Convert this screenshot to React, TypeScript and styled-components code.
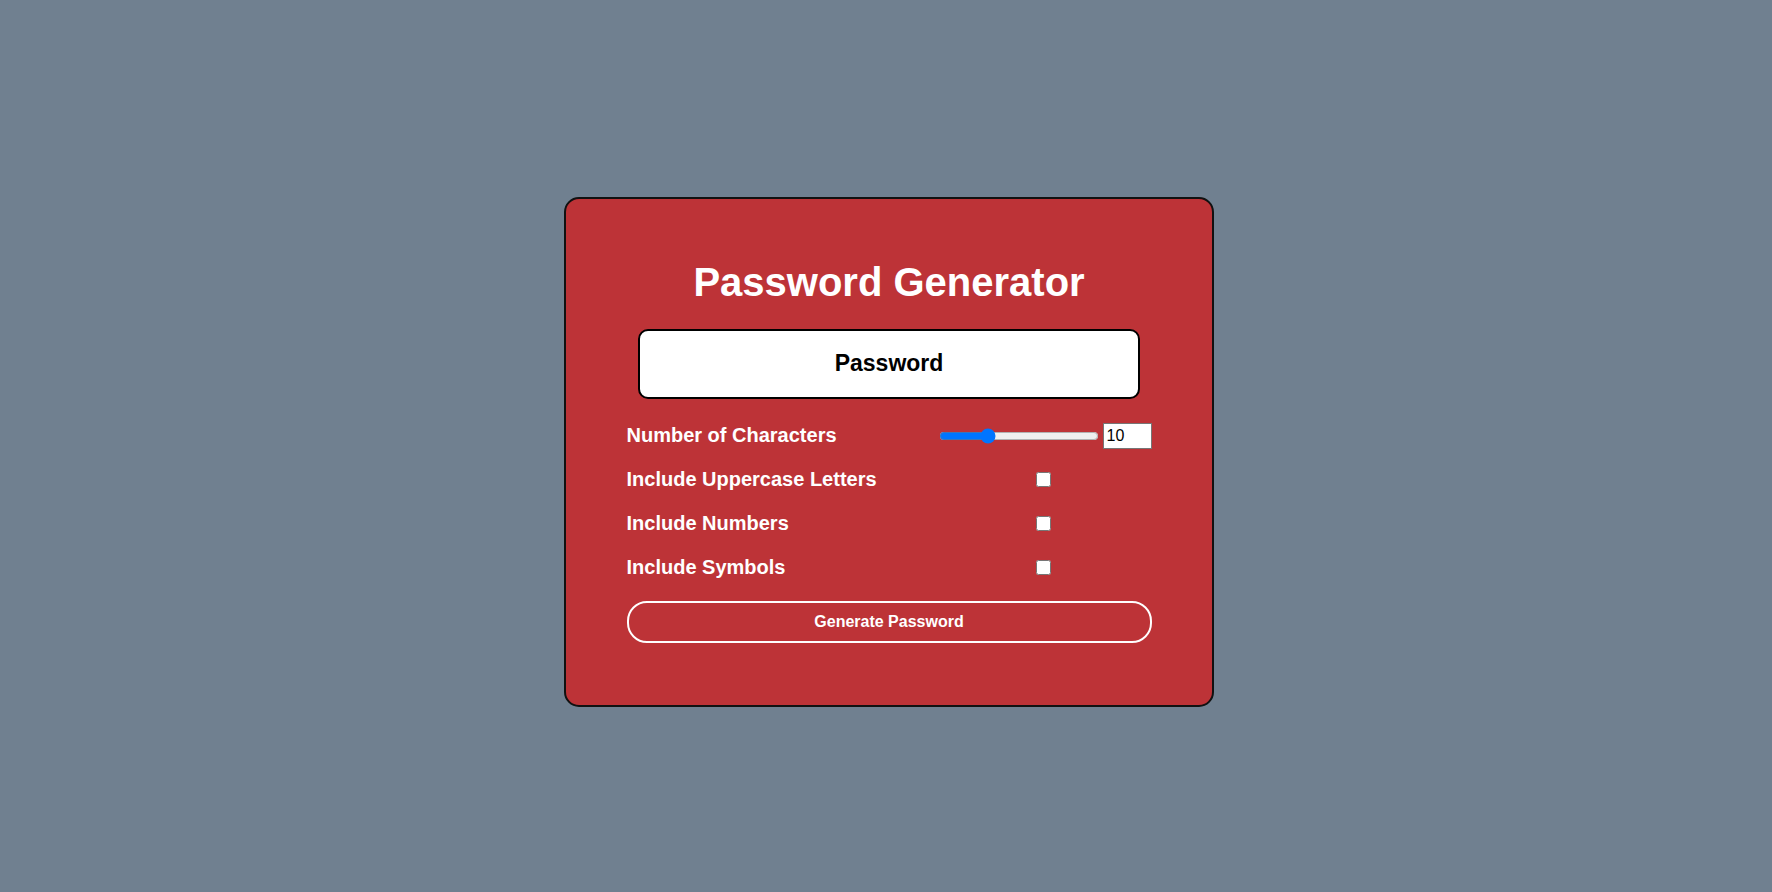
import React, { useState } from "react";
import styled, { createGlobalStyle } from "styled-components";

const GlobalStyle = createGlobalStyle`
  html, body {
    margin: 0;
    padding: 0;
    background: #708090;
    font-family: "Liberation Sans", Arial, sans-serif;
  }
  * { box-sizing: border-box; }
`;

const Page = styled.div`
  min-height: 100vh;
  display: flex;
  justify-content: center;
  align-items: center;
  padding: 11px 0 0 5px;
`;

const Card = styled.div`
  width: 650px;
  background: #bd3337;
  border: 2px solid #111;
  border-radius: 15px;
  padding: 60px 60px 62px 61px;
  display: flex;
  flex-direction: column;
`;

const Title = styled.h1`
  margin: 0;
  color: #fff;
  font-size: 40px;
  font-weight: 700;
  line-height: 46px;
  text-align: center;
`;

const Display = styled.div`
  width: 502px;
  height: 70px;
  margin: 24px auto 0;
  background: #fff;
  border: 2px solid #000;
  border-radius: 10px;
  display: flex;
  align-items: center;
  justify-content: center;
  font-size: 23px;
  font-weight: 700;
  color: #000;
`;

const Options = styled.div`
  margin-top: 24px;
  display: flex;
  flex-direction: column;
  gap: 18px;
`;

const Row = styled.div`
  height: 26px;
  display: grid;
  grid-template-columns: 1fr 213px;
  align-items: center;
`;

const Label = styled.label`
  color: #fff;
  font-size: 20px;
  font-weight: 700;
  line-height: 23px;
`;

const Control = styled.div`
  display: flex;
  align-items: center;
  justify-content: center;
`;

const Slider = styled.input`
  width: 160px;
  margin: 0;
  accent-color: #0075ff;
`;

const NumberBox = styled.input`
  width: 49px;
  height: 26px;
  margin-left: 4px;
  padding: 1px 3px;
  border: 1px solid #767676;
  background: #fff;
  font-family: "Liberation Sans", Arial, sans-serif;
  font-size: 16px;
  color: #000;
`;

const Check = styled.input`
  width: 15px;
  height: 15px;
  margin: 0 3px 0 0;
`;

const GenerateButton = styled.button`
  margin-top: 20px;
  height: 42px;
  width: 100%;
  background: transparent;
  border: 2px solid #fff;
  border-radius: 20px;
  color: #fff;
  font-family: "Liberation Sans", Arial, sans-serif;
  font-size: 16px;
  font-weight: 700;
  cursor: pointer;
`;

export default function App() {
  const [length, setLength] = useState(10);
  const [upper, setUpper] = useState(false);
  const [numbers, setNumbers] = useState(false);
  const [symbols, setSymbols] = useState(false);
  const [password, setPassword] = useState("");

  const generate = () => {
    let chars = "abcdefghijklmnopqrstuvwxyz";
    if (upper) chars += "ABCDEFGHIJKLMNOPQRSTUVWXYZ";
    if (numbers) chars += "0123456789";
    if (symbols) chars += "!@#$%^&*()_+-=[]{}";
    let out = "";
    for (let i = 0; i < length; i++) {
      out += chars[Math.floor(Math.random() * chars.length)];
    }
    setPassword(out);
  };

  return (
    <>
      <GlobalStyle />
      <Page>
        <Card>
          <Title>Password Generator</Title>
          <Display>{password || "Password"}</Display>
          <Options>
            <Row>
              <Label htmlFor="len">Number of Characters</Label>
              <Control>
                <Slider
                  id="len"
                  type="range"
                  min={1}
                  max={32}
                  value={length}
                  onChange={(e) => setLength(Number(e.target.value))}
                />
                <NumberBox
                  type="number"
                  min={1}
                  max={32}
                  value={length}
                  onChange={(e) => setLength(Number(e.target.value))}
                />
              </Control>
            </Row>
            <Row>
              <Label htmlFor="up">Include Uppercase Letters</Label>
              <Control>
                <Check id="up" type="checkbox" checked={upper} onChange={(e) => setUpper(e.target.checked)} />
              </Control>
            </Row>
            <Row>
              <Label htmlFor="num">Include Numbers</Label>
              <Control>
                <Check id="num" type="checkbox" checked={numbers} onChange={(e) => setNumbers(e.target.checked)} />
              </Control>
            </Row>
            <Row>
              <Label htmlFor="sym">Include Symbols</Label>
              <Control>
                <Check id="sym" type="checkbox" checked={symbols} onChange={(e) => setSymbols(e.target.checked)} />
              </Control>
            </Row>
          </Options>
          <GenerateButton onClick={generate}>Generate Password</GenerateButton>
        </Card>
      </Page>
    </>
  );
}
